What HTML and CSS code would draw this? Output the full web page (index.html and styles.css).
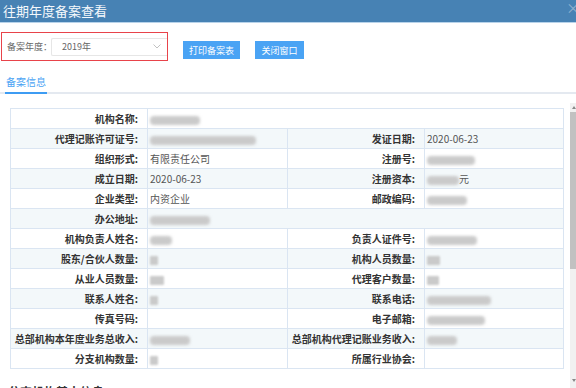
FILE: index.html
```html
<!DOCTYPE html>
<html lang="zh-CN">
<head>
  <meta charset="UTF-8">
  <meta name="viewport" content="width=device-width, initial-scale=1.0">
  <link rel="stylesheet" href="styles.css">
  <title>往期年度备案查看</title>
</head>
<body>
  <div class="dialog-header">
    <span class="dialog-title">往期年度备案查看</span>
    <span class="dialog-close">×</span>
  </div>

  <div class="toolbar">
    <div class="year-box">
      <label class="year-label">备案年度：</label>
      <div class="year-select">
        <span>2019年</span>
        <svg class="chevron" width="8" height="5" viewBox="0 0 8 5"><path d="M0.5 0.5 L4 4 L7.5 0.5" fill="none" stroke="#bbb" stroke-width="0.9"/></svg>
      </div>
    </div>
    <button class="btn btn-print">打印备案表</button>
    <button class="btn btn-close">关闭窗口</button>
  </div>

  <div class="tabs">
    <span class="tab active">备案信息</span>
  </div>

  <div class="main">
    <div class="content">
      <table class="info-table">
        <colgroup>
          <col style="width:137px">
          <col style="width:140px">
          <col style="width:137px">
          <col style="width:139px">
        </colgroup>
        <tr>
          <td class="label">机构名称:</td>
          <td colspan="3"><span class="blur" style="width:50px"></span></td>
        </tr>
        <tr class="alt">
          <td class="label">代理记账许可证号:</td>
          <td><span class="blur" style="width:106px"></span></td>
          <td class="label">发证日期:</td>
          <td>2020-06-23</td>
        </tr>
        <tr>
          <td class="label">组织形式:</td>
          <td>有限责任公司</td>
          <td class="label">注册号:</td>
          <td><span class="blur" style="width:48px"></span></td>
        </tr>
        <tr class="alt">
          <td class="label">成立日期:</td>
          <td>2020-06-23</td>
          <td class="label">注册资本:</td>
          <td><span class="blur" style="width:32px"></span>元</td>
        </tr>
        <tr>
          <td class="label">企业类型:</td>
          <td>内资企业</td>
          <td class="label">邮政编码:</td>
          <td><span class="blur" style="width:40px"></span></td>
        </tr>
        <tr class="alt">
          <td class="label">办公地址:</td>
          <td colspan="3"><span class="blur" style="width:60px"></span></td>
        </tr>
        <tr>
          <td class="label">机构负责人姓名:</td>
          <td><span class="blur" style="width:22px"></span></td>
          <td class="label">负责人证件号:</td>
          <td><span class="blur" style="width:50px"></span></td>
        </tr>
        <tr class="alt">
          <td class="label">股东/合伙人数量:</td>
          <td><span class="blur small" style="width:8px"></span></td>
          <td class="label">机构人员数量:</td>
          <td><span class="blur small" style="width:13px"></span></td>
        </tr>
        <tr>
          <td class="label">从业人员数量:</td>
          <td><span class="blur small" style="width:14px"></span></td>
          <td class="label">代理客户数量:</td>
          <td><span class="blur small" style="width:12px"></span></td>
        </tr>
        <tr class="alt">
          <td class="label">联系人姓名:</td>
          <td><span class="blur small" style="width:8px"></span></td>
          <td class="label">联系电话:</td>
          <td><span class="blur" style="width:64px"></span></td>
        </tr>
        <tr>
          <td class="label">传真号码:</td>
          <td></td>
          <td class="label">电子邮箱:</td>
          <td><span class="blur" style="width:58px"></span></td>
        </tr>
        <tr class="alt">
          <td class="label">总部机构本年度业务总收入:</td>
          <td><span class="blur" style="width:40px"></span></td>
          <td class="label">总部机构代理记账业务收入:</td>
          <td><span class="blur" style="width:30px"></span></td>
        </tr>
        <tr>
          <td class="label">分支机构数量:</td>
          <td><span class="blur small" style="width:8px"></span></td>
          <td class="label">所属行业协会:</td>
          <td></td>
        </tr>
      </table>

      <h3 class="section-title">分支机构基本信息</h3>
    </div>

    <div class="scrollbar">
      <span class="arrow up"></span>
      <span class="thumb"></span>
      <span class="arrow down"></span>
    </div>
  </div>
</body>
</html>
```

FILE: styles.css
```css
* {
  box-sizing: border-box;
}
html, body {
  height: 100%;
}
body {
  margin: 0;
  font-family: "Noto Sans CJK SC", "Liberation Sans", sans-serif;
  color: #555;
  background-color: #fff;
  overflow: hidden;
  display: flex;
  flex-direction: column;
}

/* cabecera del diálogo */
.dialog-header {
  height: 23px;
  background-color: #4782b4;
  border-bottom: 1px solid #b8d3ea;
  display: flex;
  align-items: center;
  justify-content: space-between;
  padding-left: 3px;
  flex-shrink: 0;
}
.dialog-title {
  color: #f4f8fc;
  font-size: 13px;
  line-height: 22px;
}
.dialog-close {
  color: #8fb0cf;
  font-size: 14px;
  margin-right: -4px;
  line-height: 14px;
  margin-top: -8px;
}

/* barra de herramientas */
.toolbar {
  display: flex;
  align-items: flex-start;
  padding: 9px 0 0 1px;
  height: 49px;
  flex-shrink: 0;
}
.year-box {
  width: 167px;
  height: 29px;
  border: 1px solid #e8434a;
  display: flex;
  align-items: center;
  padding-left: 5px;
}
.year-label {
  font-size: 9px;
  color: #666;
  width: 44px;
  white-space: nowrap;
}
.year-select {
  flex: 1;
  height: 18px;
  border: 1px solid #e6e6e6;
  border-right: none;
  border-radius: 2px 0 0 2px;
  display: flex;
  align-items: center;
  justify-content: space-between;
  padding: 0 6px 0 10px;
  font-size: 9px;
  color: #666;
}
.btn {
  height: 18px;
  margin-top: 9px;
  border: none;
  background-color: #4aa3f4;
  color: #fff;
  font-family: inherit;
  font-size: 9px;
  padding: 0;
  cursor: pointer;
}
.btn-print {
  width: 57px;
  margin-left: 15px;
}
.btn-close {
  width: 49px;
  margin-left: 15px;
}

/* pestañas */
.tabs {
  display: flex;
  align-items: flex-end;
  height: 22px;
  border-bottom: 2px solid #e4e9f0;
  padding-left: 5px;
  flex-shrink: 0;
}
.tab {
  font-size: 10px;
  color: #4aa3f4;
  line-height: 14px;
  padding: 0 1px 3px;
  margin-bottom: -2px;
  border-bottom: 2px solid #3d9cf3;
}

/* contenido */
.main {
  flex: 1;
  display: flex;
  min-height: 0;
}
.content {
  flex: 1;
  padding: 14px 0 0 10px;
}
.info-table {
  width: 553px;
  table-layout: fixed;
  border-collapse: collapse;
  font-size: 10px;
}
.info-table td {
  height: 20px;
  border: 1px solid #dae5f2;
  padding: 0 1px 0 2px;
  color: #555;
  white-space: nowrap;
  overflow: hidden;
}
.info-table td.label {
  text-align: right;
  font-weight: bold;
  color: #333;
  padding-right: 9px;
}
.info-table tr.alt td {
  background-color: #f3f8fa;
}
.blur {
  display: inline-block;
  height: 9px;
  vertical-align: middle;
  background-color: #cacaca;
  border-radius: 4px;
  filter: blur(1.6px);
}
.blur.small {
  border-radius: 1px;
  filter: blur(1px);
}
.section-title {
  margin: 14px 0 0 -2px;
  font-size: 12px;
  line-height: 17px;
  color: #333;
}

/* barra de desplazamiento */
.scrollbar {
  width: 7px;
  margin-left: 6px;
  margin-top: 9px;
  background-color: #f1f1f1;
  display: flex;
  flex-direction: column;
  align-items: center;
}
.scrollbar .arrow {
  width: 0;
  height: 0;
  border-left: 2px solid transparent;
  border-right: 2px solid transparent;
  margin: 3px 0;
}
.scrollbar .up {
  border-bottom: 3px solid #888;
}
.scrollbar .down {
  border-top: 3px solid #888;
  margin-top: auto;
  margin-bottom: 6px;
}
.scrollbar .thumb {
  width: 7px;
  height: 157px;
  background-color: #c1c1c1;
}
```
